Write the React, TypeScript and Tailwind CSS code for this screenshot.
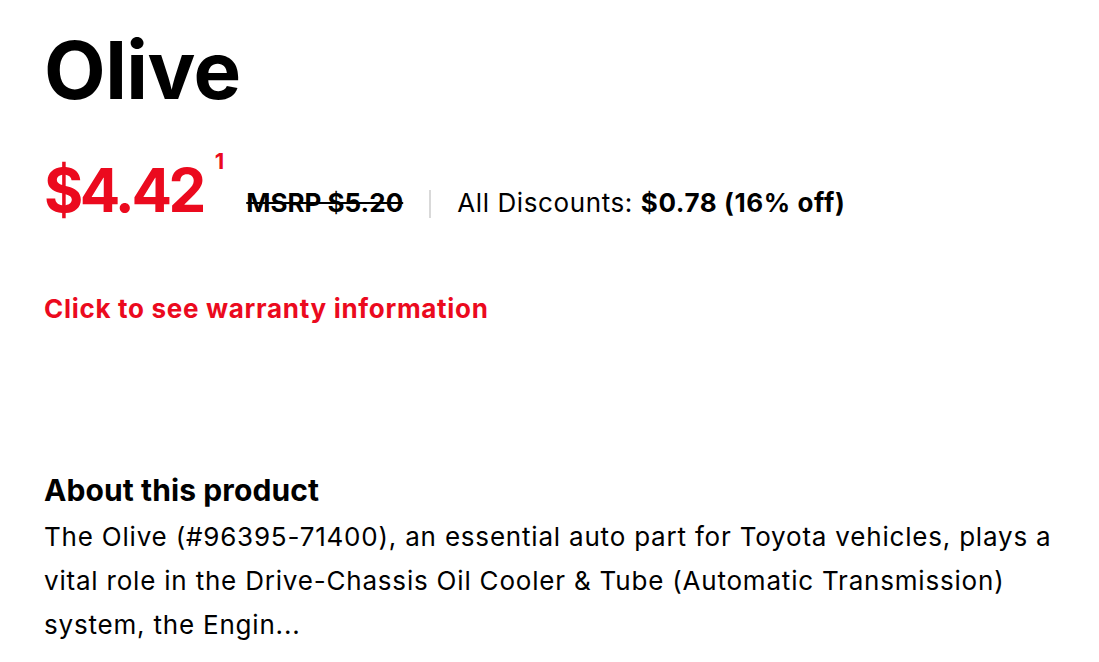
export default function App() {
  return (
    <div className="min-h-screen bg-white px-[44px] pt-[22px] text-black [font-family:Inter,'Noto_Sans',sans-serif]">
      <h1 className="text-[80px] font-bold leading-[96px] tracking-[-0.5px]">Olive</h1>

      <div className="mt-[40px] flex items-end">
        <div className="flex items-start">
          <span className="text-[60px] font-bold leading-[64px] tracking-[-3.5px] text-[#eb0a1e]">$4.42</span>
          <span className="ml-[12px] mt-[-12px] text-[22px] font-bold leading-[30px] text-[#eb0a1e]">1</span>
        </div>
        <span className="ml-[22px] mb-[4px] text-[26px] font-bold leading-[30px] line-through">MSRP $5.20</span>
        <span className="mx-[26px] mb-[4px] h-[28px] w-[2px] bg-[#d9d9d9]" />
        <span className="mb-[4px] text-[26px] leading-[30px] tracking-[0.6px]">
          All Discounts: <span className="font-bold">$0.78 (16% off)</span>
        </span>
      </div>

      <a className="mt-[70px] block text-[26px] font-bold leading-[34px] tracking-[0.7px] text-[#eb0a1e]" href="#">
        Click to see warranty information
      </a>

      <h2 className="mt-[146px] text-[30px] font-bold leading-[36px] tracking-[0.1px]">About this product</h2>
      <p className="mt-[7px] max-w-[1020px] text-[26px] leading-[44px] tracking-[0.8px]">
        The Olive (#96395-71400), an essential auto part for Toyota vehicles, plays a vital role in the
        Drive-Chassis Oil Cooler &amp; Tube (Automatic Transmission) system, the Engin...
      </p>
    </div>
  );
}
